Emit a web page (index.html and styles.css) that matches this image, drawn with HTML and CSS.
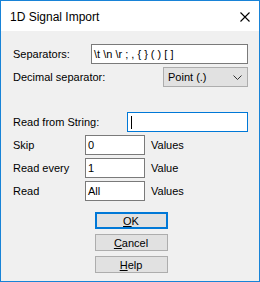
FILE: index.html
```html
<!DOCTYPE html>
<html lang="en">
  <head>
    <meta charset="UTF-8" />
    <title>1D Signal Import</title>
    <link rel="stylesheet" href="styles.css">
  </head>
  <body>
    <div class="dialog">
      <div class="titlebar">
        <span class="title">1D Signal Import</span>
        <svg class="close" width="10" height="10" viewBox="0 0 10 10">
          <path d="M0.5 0.5 L9.5 9.5 M9.5 0.5 L0.5 9.5" stroke="#000" stroke-width="1.1" fill="none" />
        </svg>
      </div>
      <div class="content">
        <div class="row">
          <span class="label label-sep">Separators:</span>
          <div class="textbox textbox-sep">\t \n \r ; , { } ( ) [ ]</div>
        </div>
        <div class="row row-tight">
          <span class="label">Decimal separator:</span>
          <div class="combo">
            <span>Point (.)</span>
            <svg width="9" height="5" viewBox="0 0 9 5">
              <path d="M0.5 0.5 L4.5 4.5 L8.5 0.5" stroke="#333" stroke-width="1" fill="none" />
            </svg>
          </div>
        </div>
        <div class="row row-gap">
          <span class="label">Read from String:</span>
          <div class="textbox textbox-focus"><span class="caret"></span></div>
        </div>
        <div class="row row-tight">
          <span class="label label-short">Skip</span>
          <div class="textbox textbox-num">0</div>
          <span class="unit">Values</span>
        </div>
        <div class="row row-tight">
          <span class="label label-short">Read every</span>
          <div class="textbox textbox-num">1</div>
          <span class="unit">Value</span>
        </div>
        <div class="row row-tight">
          <span class="label label-short">Read</span>
          <div class="textbox textbox-num">All</div>
          <span class="unit">Values</span>
        </div>
        <div class="buttons">
          <button class="btn btn-default"><u>O</u>K</button>
          <button class="btn"><u>C</u>ancel</button>
          <button class="btn"><u>H</u>elp</button>
        </div>
      </div>
    </div>
  </body>
</html>
```

FILE: styles.css
```css
body {
  margin: 0;
  background-color: #f0f0f0;
  font-family: "Liberation Sans", Arial, sans-serif;
  font-size: 11px;
  color: #000000;
}

.dialog {
  width: 260px;
  height: 282px;
  box-sizing: border-box;
  border: 1px solid #1883d7;
  background-color: #f0f0f0;
  display: flex;
  flex-direction: column;
}

.titlebar {
  height: 30px;
  background-color: #ffffff;
  display: flex;
  align-items: center;
  padding-left: 9px;
  padding-right: 9px;
}

.title {
  font-size: 12px;
  flex: 1;
  padding-top: 1px;
}

.close {
  display: block;
  margin-top: 1px;
}

.content {
  flex: 1;
  padding: 13px 11px 0 12px;
}

.row {
  display: flex;
  align-items: center;
  height: 20px;
}

.row-tight {
  margin-top: 3px;
}

.row-gap {
  margin-top: 25px;
}

.label {
  flex: 1;
}

.label-sep {
  flex: none;
  width: 78px;
}

.label-short {
  flex: none;
  width: 72px;
}

.textbox {
  box-sizing: border-box;
  height: 20px;
  background-color: #ffffff;
  border: 1px solid #7a7a7a;
  padding: 0 2px;
  display: flex;
  align-items: center;
  white-space: nowrap;
  overflow: hidden;
}

.textbox-sep {
  flex: 1;
}

.textbox-focus {
  width: 121px;
  border-color: #0078d7;
}

.textbox-num {
  width: 60px;
}

.caret {
  display: block;
  width: 1px;
  height: 13px;
  margin-left: 1px;
  background-color: #000000;
}

.unit {
  margin-left: 6px;
}

.combo {
  box-sizing: border-box;
  width: 85px;
  height: 20px;
  background-color: #e1e1e1;
  border: 1px solid #adadad;
  display: flex;
  align-items: center;
  justify-content: space-between;
  padding: 0 5px 0 4px;
}

.combo svg {
  display: block;
}

.buttons {
  display: flex;
  flex-direction: column;
  align-items: center;
  gap: 5px;
  margin-top: 11px;
  padding-left: 1px;
}

.btn {
  box-sizing: border-box;
  width: 73px;
  height: 17px;
  margin: 0;
  padding: 0;
  background-color: #e1e1e1;
  border: 1px solid #adadad;
  font-family: "Liberation Sans", Arial, sans-serif;
  font-size: 11px;
  color: #000000;
}

.btn-default {
  border: 2px solid #0078d7;
}
```
